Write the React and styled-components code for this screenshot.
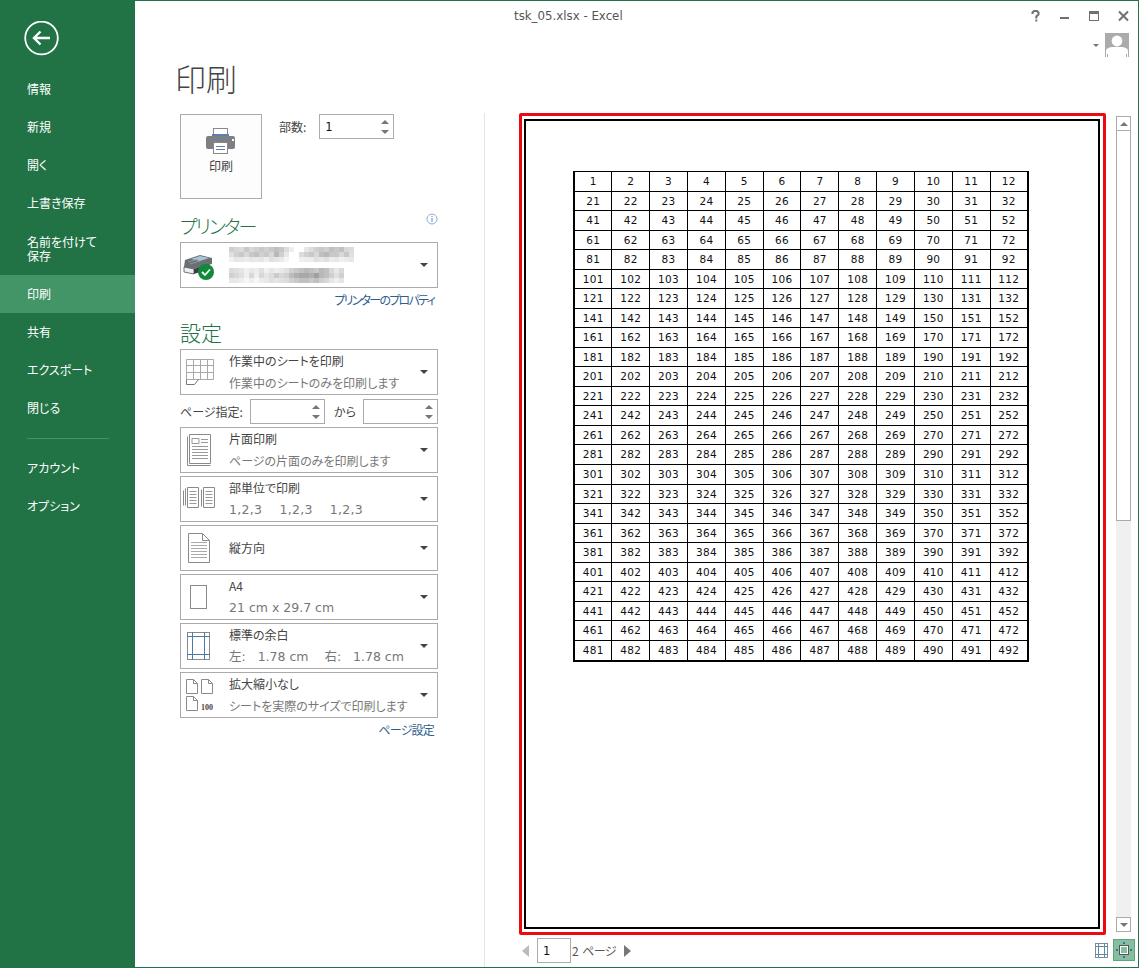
import React from 'react';
import styled, { createGlobalStyle } from 'styled-components';

const Global = createGlobalStyle`
  html, body { margin: 0; padding: 0; background: #fff; }
  body { font-family: "Noto Sans CJK JP", "Noto Sans", sans-serif; font-size: 12px; font-feature-settings: "palt"; color: #444; }
  * { box-sizing: border-box; }
`;

const GREEN = '#217346';
const Window = styled.div`
  width: 1139px; height: 968px; display: flex; overflow: hidden;
  border: 1px solid ${GREEN}; border-left: 0; background: #fff;
`;
const Sidebar = styled.nav`
  width: 135px; flex: none; background: ${GREEN}; display: flex; flex-direction: column; color: #fff;
`;
const BackWrap = styled.div`height: 69px; padding: 20px 0 0 24px;`;
const NavItem = styled.div`
  height: ${p => (p.$tall ? 53 : 38)}px; display: flex; align-items: center; padding: 0 20px 0 27px;
  line-height: 14px; font-size: 12px;
  background: ${p => (p.$active ? '#439467' : 'transparent')};
  white-space: pre-line;
`;
const NavRule = styled.div`
  height: 1px; width: 82px; margin: 11px 0 10px 27px; background: #439467;
`;
const Main = styled.main`flex: 1; min-width: 0; display: flex; flex-direction: column;`;
const TopBar = styled.header`height: 54px; display: flex; justify-content: space-between; flex: none;`;
const FileName = styled.div`
  padding: 7px 0 0 379px; font-size: 11.8px; line-height: 16px; color: #555;
  font-family: "DejaVu Sans", sans-serif;
`;
const Controls = styled.div`display: flex; flex-direction: column; align-items: flex-end; padding: 7px 9px 0 0;`;
const WinButtons = styled.div`display: flex; align-items: center;`;
const AccountRow = styled.div`display: flex; align-items: center; gap: 6px; padding: 9px 0 0;`;
const PageTitle = styled.h1`
  margin: 0 0 13px; height: 45px; padding-left: 40px; font-size: 31px; line-height: 45px; font-weight: 300; color: #444; flex: none;
`;
const Content = styled.div`flex: 1; min-height: 0; display: flex; padding-left: 45px;`;
const LeftColumn = styled.section`width: 258px; flex: none; padding-top: 1px; display: flex; flex-direction: column;`;
const VRule = styled.div`width: 1px; flex: none; margin: 0 34px 0 46px; background: #e3e3e3;`;
const PrintRow = styled.div`display: flex; gap: 17px; height: 85px; flex: none;`;
const PrintButton = styled.button`
  width: 82px; height: 85px; padding: 13px 0 0; border: 1px solid #ababab; background: #fdfdfd; color: #444;
  font: inherit; display: flex; flex-direction: column; align-items: center; gap: 3px;
`;
const Copies = styled.div`display: flex; gap: 13px; height: 25px; align-items: center; font-size: 12px;`;
const Spin = styled.div`
  width: 75px; height: 25px; border: 1px solid #ababab; background: #fff; display: flex;
  align-items: center; justify-content: space-between; padding: 0 4px 0 5px; flex: none;
  font-family: "DejaVu Sans", sans-serif; font-size: 11.5px; color: #111;
`;
const SpinArrows = styled.div`display: flex; flex-direction: column; gap: 6px;`;
const Tri = styled.i`
  display: block; width: 0; height: 0; flex: none;
  border-left: ${p => p.$w || 4}px solid transparent; border-right: ${p => p.$w || 4}px solid transparent;
  ${p => (p.$up ? 'border-bottom' : 'border-top')}: ${p => p.$h || 4}px solid ${p => p.$c || '#777'};
`;
const SideTri = styled.i`
  display: block; width: 0; height: 0; flex: none;
  border-top: 6px solid transparent; border-bottom: 6px solid transparent;
  ${p => (p.$left ? 'border-right' : 'border-left')}: 7px solid ${p => p.$c};
`;
const SectionHead = styled.div`
  height: ${p => p.$h}px; display: flex; justify-content: space-between; flex: none;
  padding-top: ${p => p.$pt}px;
`;
const SectionTitle = styled.h2`
  margin: 0; font-size: ${p => p.$size || 19}px; line-height: 28px; font-weight: 300; color: ${GREEN};
  letter-spacing: ${p => p.$ls || 0}px;
`;
const InfoIcon = styled.div`padding: 1px 0 0;`;
const Drop = styled.div`
  height: 46px; flex: none; border: 1px solid #ababab; background: #fff; display: flex; align-items: stretch;
  margin-bottom: ${p => (p.$flush ? 0 : 3)}px;
`;
const DropIcon = styled.div`width: 48px; flex: none; height: 44px;`;
const DropText = styled.div`flex: 1; min-width: 0; display: flex; flex-direction: column; padding-top: 2px;`;
const Line1 = styled.div`height: 18px; line-height: 18px; font-size: 12px; color: #444; white-space: nowrap; ${p => p.$center && 'height: 40px; line-height: 40px;'}`;
const Line2 = styled.div`
  height: 22px; line-height: 22px; margin-top: 2px; font-size: 12px; color: #777; white-space: pre;
  ${p => p.$latin && 'font-family: "DejaVu Sans", "Noto Sans CJK JP", sans-serif; font-size: 12.5px;'}
  letter-spacing: ${p => p.$track || 0}px;
`;
const DropArrow = styled.div`width: 20px; flex: none; display: flex; align-items: center; padding-left: 3px;`;
const LinkRow = styled.div`
  height: 24px; flex: none; text-align: right; padding: ${p => p.$pt}px 4px 0 0; line-height: 16px; color: #2f5f8f; font-size: 12px;
  letter-spacing: ${p => p.$ls}px;
`;
const RangeRow = styled.div`display: flex; align-items: center; height: 25px; margin: 4px 0 3px; flex: none; font-size: 12px;`;
const RangeLabel = styled.span`width: ${p => p.$w}px; flex: none; ${p => p.$pl && `padding-left: ${p.$pl}px;`}`;

const PreviewColumn = styled.section`flex: 1; min-width: 0; display: flex; flex-direction: column;`;
const PreviewRow = styled.div`display: flex; height: 822px; flex: none;`;
const RedFrame = styled.div`
  width: 587px; height: 822px; flex: none; border: 3px solid #ea0a10; border-radius: 2px;
  padding: 3px 3px 3px 2px; display: flex;
`;
const Sheet = styled.div`flex: 1; border: 2px solid #000; background: #fff; padding: 50px 0 0 47px;`;
const Grid = styled.table`
  width: 456px; height: 491px; border-collapse: collapse; table-layout: fixed;
  border-left: 2px solid #000; border-bottom: 2px solid #000; border-right: 2px solid #000; border-top: 1px solid #000;
`;
const Cell = styled.td`
  border: 1px solid #000; padding: 0; text-align: center; vertical-align: middle;
  font-family: "DejaVu Sans", sans-serif; font-size: 10.5px; letter-spacing: .3px; line-height: 1; color: #111;
`;
const ScrollBar = styled.div`
  width: 15px; margin: 3px 0 3px 10px; flex: none; display: flex; flex-direction: column; background: #f0f0f0;
`;
const ScrollBtn = styled.div`
  height: 15px; flex: none; background: #fff; border: 1px solid #ababab; display: flex; align-items: center; justify-content: center;
`;
const ScrollThumb = styled.div`height: 390px; flex: none; background: #fff; border: 1px solid #ababab; border-top: 0;`;
const ScrollTrack = styled.div`flex: 1;`;
const PagerBar = styled.div`flex: 1; display: flex; align-items: flex-start; justify-content: space-between; padding: 3px 3px 0 3px;`;
const Pager = styled.div`display: flex; align-items: center; height: 25px;`;
const PageInput = styled.div`
  width: 34px; height: 25px; border: 1px solid #ababab; margin: 0 1px 0 8px; display: flex; align-items: center;
  padding-left: 5px; font-family: "DejaVu Sans", sans-serif; font-size: 11.5px; color: #111;
`;
const PageOf = styled.span`margin-right: 8px; color: #555; font-size: 12px; letter-spacing: -0.6px; word-spacing: 2px;`;
const ViewBtns = styled.div`display: flex; align-items: center; gap: 5px; height: 22px; margin-top: 1px;`;
const ViewBtn = styled.div`
  width: ${p => (p.$on ? 22 : 13)}px; height: ${p => (p.$on ? 22 : 15)}px; display: flex; align-items: center; justify-content: center;
  background: ${p => (p.$on ? '#86bf9f' : 'transparent')}; border: ${p => (p.$on ? '1px solid #5fa47d' : '0')};
`;

const S = '#8a8a8a';

const BackIcon = () => (
  <svg width="36" height="36" viewBox="0 0 36 36" fill="none" stroke="#fff">
    <circle cx="17.5" cy="17" r="16.3" strokeWidth="1.8" />
    <path d="M26 17H10M16.5 10.5L10 17l6.5 6.5" strokeWidth="2.4" />
  </svg>
);
const HelpIcon = () => (
  <svg width="20" height="16" viewBox="0 0 20 16" style={{ marginRight: 11 }}>
    <path d="M3.5 6V4.5L5 3h3l1.5 1.5v2L7.3 8.5v2" fill="none" stroke="#707070" strokeWidth="2" />
    <rect x="6.3" y="11.5" width="2" height="2" fill="#707070" />
  </svg>
);
const MinIcon = () => (
  <svg width="10" height="16" viewBox="0 0 10 16" style={{ marginRight: 19 }}><rect y="9" width="9" height="2" fill="#707070" /></svg>
);
const MaxIcon = () => (
  <svg width="11" height="16" viewBox="0 0 11 16" style={{ marginRight: 18 }}>
    <rect x=".5" y="3.5" width="9" height="9" fill="none" stroke="#707070" /><rect y="3" width="10" height="3" fill="#707070" />
  </svg>
);
const CloseIcon = () => (
  <svg width="11" height="16" viewBox="0 0 11 16"><path d="M1 3.5l9 9M10 3.5l-9 9" stroke="#707070" strokeWidth="2" /></svg>
);
const AvatarIcon = () => (
  <svg width="24" height="24" viewBox="0 0 24 24">
    <rect width="24" height="24" fill="#ababab" />
    <circle cx="12" cy="8" r="5.4" fill="#fff" />
    <path d="M1 24v-6c0-3 4-4 7-4h8c3 0 7 1 7 4v6z" fill="#fff" />
    <rect x="2" y="21" width="1" height="3" fill="#ababab" /><rect x="21" y="21" width="1" height="3" fill="#ababab" />
  </svg>
);
const PrinterBig = () => (
  <svg width="30" height="26" viewBox="0 0 30 26">
    <rect x="7.5" y=".5" width="14" height="10" fill="#fff" stroke="#888" />
    <rect x="6" y="6" width="17" height="4" fill="#5b7fae" />
    <path d="M2 8h25a2 2 0 0 1 2 2v9a2 2 0 0 1-2 2H2a2 2 0 0 1-2-2V10a2 2 0 0 1 2-2z" fill="#7c8085" />
    <rect x="26" y="11" width="2" height="2" fill="#fff" />
    <rect x="7.5" y="14.5" width="14" height="11" fill="#fff" stroke="#888" />
    <path d="M10 18.5h9M10 21.5h9" stroke="#5b7fae" />
  </svg>
);
const InfoSvg = () => (
  <svg width="12" height="12" viewBox="0 0 12 12" style={{ display: 'block' }}>
    <circle cx="6" cy="6" r="5" fill="none" stroke="#8fb0d6" />
    <path d="M6 3v1M6 5v4" stroke="#5b86b8" />
  </svg>
);
const PrinterSmall = () => (
  <svg width="44" height="44" viewBox="0 0 44 44">
    <path d="M4 17l15-5 12 3v6L13 26 3 24z" fill="#6a6f73" />
    <path d="M10 16l9-3 9 2-9 3z" fill="#a9c7da" />
    <path d="M7 19l10-3M9 21l10-3" stroke="#9aa0a4" strokeWidth=".8" />
    <path d="M3 24l10 2v5L3 29z" fill="#eee" stroke="#555" strokeWidth=".8" />
    <path d="M13 26l15-5v5l-15 5z" fill="#3a3e41" />
    <circle cx="25" cy="29" r="8" fill="#108a3a" />
    <path d="M21 29l3 3 5-5.5" fill="none" stroke="#fff" strokeWidth="1.8" />
  </svg>
);
const SheetIcon = () => (
  <svg width="44" height="44" viewBox="0 0 44 44" fill="none" stroke={S}>
    <path d="M5.5 9.5h27v20h-27zM5.5 15.5h27M5.5 22.5h27M12.5 9.5v20M19.5 9.5v20M26.5 9.5v20" stroke="#a8a8a8" />
    <path d="M5.5 29.5v5h8l4-5" stroke="#777" />
  </svg>
);
const OneSideIcon = () => (
  <svg width="44" height="44" viewBox="0 0 44 44" fill="none" stroke={S}>
    <path d="M6.5 8.5v29h23" /><path d="M8.5 6.5h21v29h-21z" />
    <path d="M11 10.5h7v5h-7zM20 11.5h7M20 14.5h7M11 18.5h16M11 21.5h16M11 24.5h16M11 27.5h16M11 30.5h16" stroke="#999" />
  </svg>
);
const CollateIcon = () => (
  <svg width="44" height="44" viewBox="0 0 44 44" fill="none" stroke={S}>
    <path d="M2.5 13.5v15M4.5 11.5v17" />
    <path d="M6.5 10.5h11v20h-11z" fill="#fff" /><path d="M8.5 14.5h7M8.5 17.5h7M8.5 20.5h7M8.5 23.5h7M8.5 26.5h7" stroke="#999" />
    <path d="M20.5 12.5v17" /><path d="M22.5 10.5h11v20h-11z" fill="#fff" /><path d="M24.5 14.5h7M24.5 17.5h7M24.5 20.5h7M24.5 23.5h7M24.5 26.5h7" stroke="#999" />
  </svg>
);
const PortraitIcon = () => (
  <svg width="44" height="44" viewBox="0 0 44 44" fill="none" stroke={S}>
    <path d="M7.5 7.5h14l7 7v22h-21zM21.5 7.5v7h7" />
    <path d="M10 16.5h16M10 19.5h16M10 22.5h16M10 25.5h16M10 28.5h16M10 31.5h16" stroke="#aaa" />
  </svg>
);
const PageIcon = () => (
  <svg width="44" height="44" viewBox="0 0 44 44" fill="none"><rect x="9.5" y="10.5" width="16" height="23" stroke={S} /></svg>
);
const MarginIcon = () => (
  <svg width="44" height="44" viewBox="0 0 44 44" fill="none">
    <rect x="6.5" y="8.5" width="22" height="27" stroke={S} />
    <path d="M11.5 8v28M23.5 8v28M6 12.5h23M6 30.5h23" stroke="#4a7ba7" />
  </svg>
);
const ScaleIcon = () => (
  <svg width="44" height="44" viewBox="0 0 44 44" fill="none" stroke={S}>
    <path d="M5.5 6.5h7l4 4v10h-11zM12.5 6.5v4h4M20.5 6.5h7l4 4v10h-11zM27.5 6.5v4h4M5.5 23.5h7l4 4v10h-11zM12.5 23.5v4h4" />
    <text x="20" y="37" fontFamily="Liberation Serif, serif" fontSize="8" fontWeight="bold" fill="#444" stroke="none">100</text>
  </svg>
);
const ViewNormal = () => (
  <svg width="13" height="15" viewBox="0 0 13 15" fill="none" stroke="#7d8c96">
    <rect x=".5" y=".5" width="12" height="14" /><path d="M3.5 0v15M9.5 0v15M0 3.5h13M0 11.5h13" stroke="#5f88ab" />
  </svg>
);
const ViewZoom = () => (
  <svg width="16" height="16" viewBox="0 0 16 16" fill="none">
    <rect x="4.5" y="4.5" width="7" height="7" stroke="#fff" /><rect x="3.5" y="3.5" width="9" height="9" stroke="#555" />
    <path d="M8 0v2M0 8h2M14 8h2M8 14v2" stroke="#3e6fa8" strokeWidth="2" />
  </svg>
);

const blur1 = [
  'cfd6dcc8d8d0c8d0c8c0c8ddeeffffe6dccfc8d0c0c8c0d8ddd0',
  'e0d0c8d8c8c0d0c8d8b8d0e8ffffdcd0c8d8c0b8c8c8d8c8e0d8',
  'f0e6e8ece6e8e6eee0e6eaf6fffff0ecece0e6e0ece8f0ece8f0',
];
const blur2 = [
  'dce0e6f0e8ece0f0e6eee8e0d0c8c0b8c0c8b8c0d8e8d8e0f0ee',
  'd0d8e0f0d8f0d8e6dccad8d0bcb0a8a8b0a0b8c0d0e0d0d8f0e6',
  'e8e8eef6eef6ece8e0e6e0dcd0c8c0c0c8c0d0d8e6eee6e8f6f0',
];
const Mosaic = ({ rows, y, max }) =>
  rows.map((r, ri) =>
    Array.from({ length: Math.min(max, r.length / 2) }, (_, i) => (
      <rect key={`${y}-${ri}-${i}`} x={i * 5} y={y + ri * 5} width="5" height="5" fill={`#${r.slice(i * 2, i * 2 + 2).repeat(3)}`} />
    ))
  );
const BlurredName = () => (
  <svg width="130" height="40" viewBox="0 0 130 40" style={{ display: 'block', marginTop: 2 }}>
    <Mosaic rows={blur1} y={0} max={25} />
    <Mosaic rows={blur2} y={21} max={23} />
  </svg>
);

const options = [
  { icon: <OneSideIcon />, a: '片面印刷', b: 'ページの片面のみを印刷します' },
  { icon: <CollateIcon />, a: '部単位で印刷', b: '1,2,3    1,2,3    1,2,3', latin: true, track: 0.3 },
  { icon: <PortraitIcon />, a: '縦方向' },
  { icon: <PageIcon />, a: 'A4', b: '21 cm x 29.7 cm', latin: true },
  { icon: <MarginIcon />, a: '標準の余白', b: '左:   1.78 cm    右:   1.78 cm', latin: true },
  { icon: <ScaleIcon />, a: '拡大縮小なし', b: 'シートを実際のサイズで印刷します' },
];

const Arrow = () => <DropArrow><Tri $w={4} $h={4} $c="#444" /></DropArrow>;
const Option = ({ icon, a, b, latin, track }) => (
  <Drop>
    <DropIcon>{icon}</DropIcon>
    <DropText>
      <Line1 $center={!b}>{a}</Line1>
      {b && <Line2 $latin={latin} $track={track}>{b}</Line2>}
    </DropText>
    <Arrow />
  </Drop>
);
const SpinBox = ({ value }) => (
  <Spin>
    <span>{value}</span>
    <SpinArrows><Tri $up $c="#777" /><Tri $c="#777" /></SpinArrows>
  </Spin>
);

const menuA = ['情報', '新規', '開く', '上書き保存'];
const menuB = ['共有', 'エクスポート', '閉じる'];
const menuC = ['アカウント', 'オプション'];

export default function App() {
  const rows = Array.from({ length: 25 }, (_, r) => Array.from({ length: 12 }, (_, c) => r * 20 + c + 1));
  return (
    <>
      <Global />
      <Window>
        <Sidebar>
          <BackWrap><BackIcon /></BackWrap>
          {menuA.map(t => <NavItem key={t}>{t}</NavItem>)}
          <NavItem $tall>{'名前を付けて\n保存'}</NavItem>
          <NavItem $active>印刷</NavItem>
          {menuB.map(t => <NavItem key={t}>{t}</NavItem>)}
          <NavRule />
          {menuC.map(t => <NavItem key={t}>{t}</NavItem>)}
        </Sidebar>
        <Main>
          <TopBar>
            <FileName>tsk_05.xlsx - Excel</FileName>
            <Controls>
              <WinButtons><HelpIcon /><MinIcon /><MaxIcon /><CloseIcon /></WinButtons>
              <AccountRow><Tri $w={3} $h={3} $c="#777" /><AvatarIcon /></AccountRow>
            </Controls>
          </TopBar>
          <PageTitle>印刷</PageTitle>
          <Content>
            <LeftColumn>
              <PrintRow>
                <PrintButton><PrinterBig /><span>印刷</span></PrintButton>
                <Copies>部数:<SpinBox value="1" /></Copies>
              </PrintRow>
              <SectionHead $h={43} $pt={13}>
                <SectionTitle $ls={-2}>プリンター</SectionTitle>
                <InfoIcon><InfoSvg /></InfoIcon>
              </SectionHead>
              <Drop $flush>
                <DropIcon><PrinterSmall /></DropIcon>
                <DropText><BlurredName /></DropText>
                <Arrow />
              </Drop>
              <LinkRow $pt={4} $ls={-1.75}>プリンターのプロパティ</LinkRow>
              <SectionHead $h={37} $pt={6}>
                <SectionTitle $size={21}>設定</SectionTitle>
              </SectionHead>
              <Drop $flush>
                <DropIcon><SheetIcon /></DropIcon>
                <DropText>
                  <Line1>作業中のシートを印刷</Line1>
                  <Line2>作業中のシートのみを印刷します</Line2>
                </DropText>
                <Arrow />
              </Drop>
              <RangeRow>
                <RangeLabel $w={70}>ページ指定:</RangeLabel>
                <SpinBox value="" />
                <RangeLabel $w={38} $pl={9}>から</RangeLabel>
                <SpinBox value="" />
              </RangeRow>
              {options.map(o => <Option key={o.a} {...o} />)}
              <LinkRow $pt={1} $ls={-0.8}>ページ設定</LinkRow>
            </LeftColumn>
            <VRule />
            <PreviewColumn>
              <PreviewRow>
                <RedFrame>
                  <Sheet>
                    <Grid>
                      <tbody>
                        {rows.map((row, i) => (
                          <tr key={i}>{row.map(n => <Cell key={n}>{n}</Cell>)}</tr>
                        ))}
                      </tbody>
                    </Grid>
                  </Sheet>
                </RedFrame>
                <ScrollBar>
                  <ScrollBtn><Tri $up $c="#777" /></ScrollBtn>
                  <ScrollThumb />
                  <ScrollTrack />
                  <ScrollBtn><Tri $c="#777" /></ScrollBtn>
                </ScrollBar>
              </PreviewRow>
              <PagerBar>
                <Pager>
                  <SideTri $left $c="#bbb" />
                  <PageInput>1</PageInput>
                  <PageOf>2 ページ</PageOf>
                  <SideTri $c="#777" />
                </Pager>
                <ViewBtns>
                  <ViewBtn><ViewNormal /></ViewBtn>
                  <ViewBtn $on><ViewZoom /></ViewBtn>
                </ViewBtns>
              </PagerBar>
            </PreviewColumn>
          </Content>
        </Main>
      </Window>
    </>
  );
}
